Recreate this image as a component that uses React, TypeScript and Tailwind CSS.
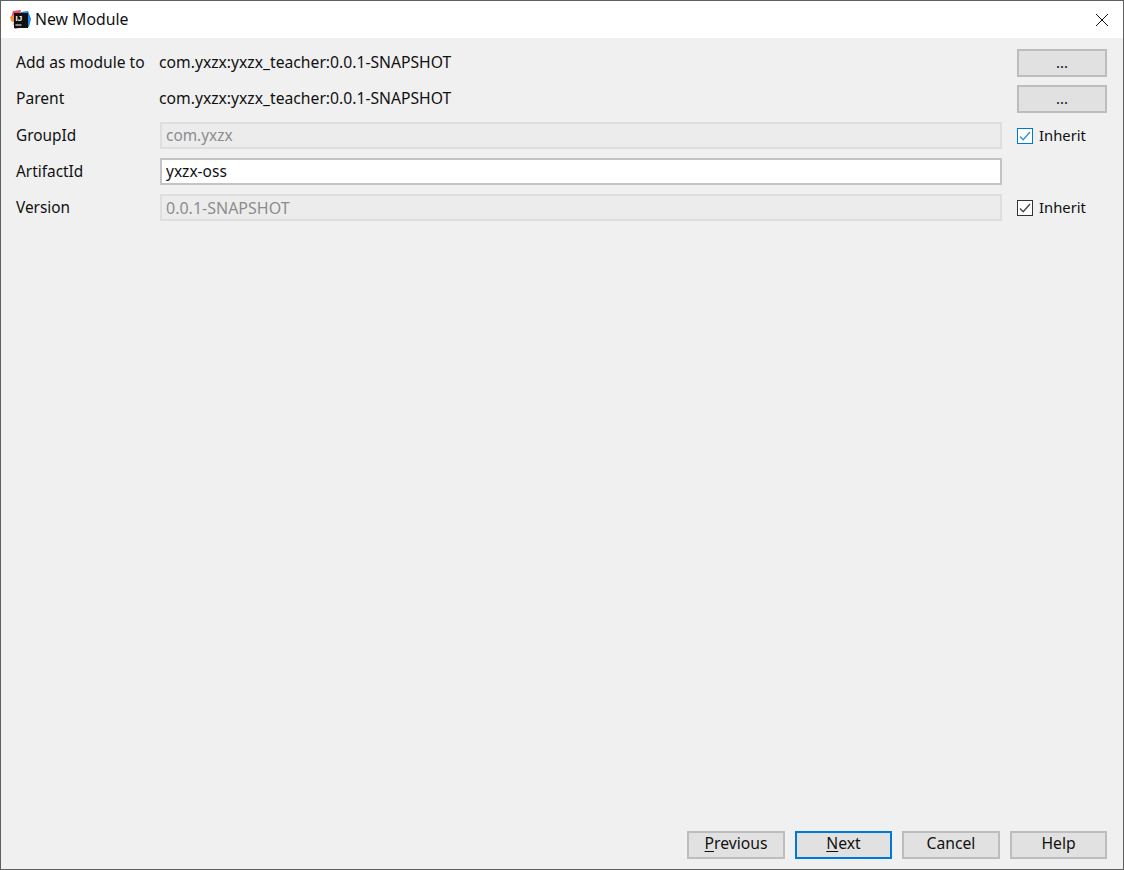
import React from 'react';

const font = { fontFamily: '"Noto Sans", sans-serif' };

function PlainRow({ label, value }: { label: string; value: string }) {
  return (
    <div className="flex h-[28px] items-center">
      <div className="w-[143px] shrink-0 pb-[1px] text-[15.6px] text-[#111]">{label}</div>
      <div className="flex-1 pb-[1px] text-[15.7px] text-[#111]">{value}</div>
      <button className="h-[28px] w-[90px] shrink-0 border-2 border-[#bdbdbd] bg-[#e1e1e1] pb-[2px] text-[15px] leading-none text-[#111]">...</button>
    </div>
  );
}

function FieldRow({ label, value, size, disabled, check }: { label: string; value: string; size: string; disabled?: boolean; check?: 'focus' | 'plain' }) {
  return (
    <div className="flex h-[27px] items-center">
      <div className="w-[144px] shrink-0 text-[15.4px] text-[#111]">{label}</div>
      {disabled ? (
        <div className={`flex h-[27px] w-[842px] shrink-0 items-center border-2 border-[#dedede] bg-[#ececec] pl-[4px] text-[#8c8c8c] ${size}`}>{value}</div>
      ) : (
        <div className={`flex h-[27px] w-[842px] shrink-0 items-center border-2 border-[#c4c4c4] bg-white pl-[4px] text-[#111] ${size}`}>{value}</div>
      )}
      {check && (
        <div className="ml-[15px] flex items-center gap-[6px] text-[14.8px] text-[#111]">
          <svg width="16" height="16" viewBox="0 0 16 16" className="shrink-0">
            <rect x="0.5" y="0.5" width="15" height="15" fill="#fff" stroke={check === 'focus' ? '#0078d7' : '#333'} />
            <path d="M3 8.5 L6.2 11.8 L13 4" fill="none" stroke={check === 'focus' ? '#2f8fe0' : '#444'} strokeWidth="1.3" />
          </svg>
          <span className="pb-[1px]">Inherit</span>
        </div>
      )}
    </div>
  );
}

function FooterButton({ children, primary, narrow }: { children: React.ReactNode; primary?: boolean; narrow?: boolean }) {
  return (
    <button className={`h-[28px] border-2 bg-[#e1e1e1] pb-[2px] text-[15.7px] leading-none text-[#111] ${narrow ? 'w-[97px]' : 'w-[98px]'} ${primary ? 'border-[#0078d7]' : 'border-[#bdbdbd]'}`}>
      {children}
    </button>
  );
}

function AppLogo() {
  return (
    <svg width="21" height="20" viewBox="0 0 21 20" className="shrink-0">
      <path d="M3 1 L11 0 L9 10 L1 8 Z" fill="#f0476f" />
      <path d="M0 7 L4 5 L5 13 L1 11 Z" fill="#f7912d" />
      <path d="M11 2 L18 1 L21 9 L19 17 L12 15 Z" fill="#1a86ef" />
      <path d="M3 13 L9 18 L5 19 Z" fill="#f0476f" />
      <rect x="4" y="3" width="14" height="15" fill="#111" />
      <text x="5.5" y="11" fontSize="8" fontWeight="700" fill="#fff" fontFamily="Liberation Sans, sans-serif">IJ</text>
      <rect x="5.5" y="14.5" width="6" height="1" fill="#fff" />
    </svg>
  );
}

export default function App() {
  return (
    <div style={font} className="flex h-[870px] w-[1124px] flex-col border border-[#5f5f5f] bg-[#f0f0f0]">
      {/* title bar */}
      <div className="flex h-[37px] shrink-0 items-center bg-white pl-[9px] pr-[14px]">
        <AppLogo />
        <span className="ml-[4px] text-[15.8px] text-[#111]">New Module</span>
        <svg width="14" height="14" viewBox="0 0 14 14" className="ml-auto">
          <path d="M1 1 L13 13 M13 1 L1 13" stroke="#111" strokeWidth="1" fill="none" />
        </svg>
      </div>

      {/* form */}
      <div className="flex flex-1 flex-col pl-[15px] pr-[16px] pt-[11px]">
        <div className="flex flex-col gap-[8px]">
          <PlainRow label="Add as module to" value="com.yxzx:yxzx_teacher:0.0.1-SNAPSHOT" />
          <PlainRow label="Parent" value="com.yxzx:yxzx_teacher:0.0.1-SNAPSHOT" />
        </div>
        <div className="mt-[9px] flex flex-col gap-[9px]">
          <FieldRow label="GroupId" value="com.yxzx" size="text-[15.4px]" disabled check="focus" />
          <FieldRow label="ArtifactId" value="yxzx-oss" size="text-[15.5px]" />
          <FieldRow label="Version" value="0.0.1-SNAPSHOT" size="text-[16px]" disabled check="plain" />
        </div>
      </div>

      {/* footer */}
      <div className="flex justify-end gap-[10px] pb-[10px] pr-[16px]">
        <FooterButton><span className="underline underline-offset-2">P</span>revious</FooterButton>
        <FooterButton primary narrow><span className="underline underline-offset-2">N</span>ext</FooterButton>
        <FooterButton>Cancel</FooterButton>
        <FooterButton narrow>Help</FooterButton>
      </div>
    </div>
  );
}
